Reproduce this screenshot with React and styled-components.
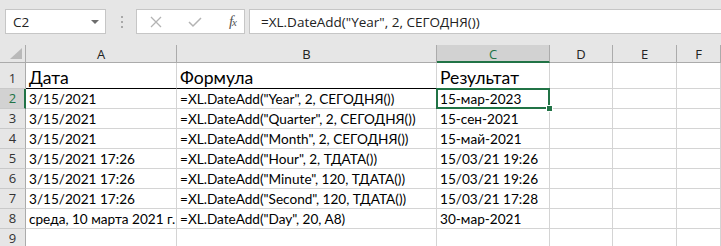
import React from 'react';
import styled, {createGlobalStyle, css} from 'styled-components';

const GREEN = '#217346';
const HEAD_BG = '#e6e6e6';
const HEAD_SEL = '#d2d2d2';
const GRID = '#d4d4d4';
const HEAD_LINE = '#ababab';

const GlobalStyle = createGlobalStyle`
    html, body {
        margin: 0;
        padding: 0;
        background: ${HEAD_BG};
        overflow: hidden;
    }
`;

const Window = styled.div`
    width: 721px;
    height: 246px;
    background: ${HEAD_BG};
    overflow: hidden;
`;

const FormulaBar = styled.div`
    display: flex;
    align-items: center;
    height: 45px;
    box-sizing: border-box;
    padding: 9px 0 11px 5px;
`;

const NameBox = styled.div`
    box-sizing: border-box;
    width: 101px;
    height: 25px;
    background: #fff;
    border: 1px solid #c6c6c6;
    display: flex;
    align-items: center;
    justify-content: space-between;
    padding: 0 6px 0 7px;
    font-family: "Open Sans", "Liberation Sans", sans-serif;
    font-size: 13.5px;
    color: #222;
`;

const DropArrow = styled.span`
    width: 0;
    height: 0;
    border-left: 4px solid transparent;
    border-right: 4px solid transparent;
    border-top: 4px solid #6d6d6d;
    margin-top: 1px;
`;

const Grip = styled.div`
    display: flex;
    flex-direction: column;
    gap: 3px;
    margin: 0 13px 0 15px;
    span {
        width: 2px;
        height: 2px;
        background: #a8a8a8;
    }
`;

const FxButtons = styled.div`
    box-sizing: border-box;
    width: 109px;
    height: 25px;
    background: #fff;
    border: 1px solid #c6c6c6;
    display: flex;
    align-items: center;
    justify-content: space-between;
    padding: 0 8px 0 13px;
`;

const Fx = styled.span`
    font-family: "Liberation Serif", serif;
    font-style: italic;
    font-size: 15px;
    color: #555;
    letter-spacing: -1px;
    small {
        font-size: 11px;
    }
`;

const FormulaInput = styled.div`
    flex: 1;
    box-sizing: border-box;
    height: 25px;
    margin-left: 4px;
    background: #fff;
    border: 1px solid #c6c6c6;
    border-right: none;
    display: flex;
    align-items: center;
    padding-left: 11px;
    font-family: "Open Sans", "Liberation Sans", sans-serif;
    font-size: 13.5px;
    color: #222;
    white-space: nowrap;
`;

const Sheet = styled.div`
    display: grid;
    grid-template-columns: 26px 151px 260px 113px 63px 64px 1fr;
    grid-template-rows: 18px 26px repeat(8, 20px);
    background: #fff;
`;

const Corner = styled.div`
    background: ${HEAD_BG};
    border-right: 1px solid ${HEAD_LINE};
    border-bottom: 1px solid ${HEAD_LINE};
    display: flex;
    align-items: flex-end;
    justify-content: flex-end;
    padding: 0 3px 3px 0;
`;

const ColHead = styled.div`
    box-sizing: border-box;
    background: ${HEAD_BG};
    border-right: 1px solid ${HEAD_LINE};
    border-bottom: 1px solid ${HEAD_LINE};
    display: flex;
    align-items: center;
    justify-content: center;
    font-family: "Open Sans", "Liberation Sans", sans-serif;
    font-size: 13px;
    color: #222;
    ${p => p.$selected && css`
        background: ${HEAD_SEL};
        border-bottom: 2px solid ${GREEN};
        color: ${GREEN};
        padding-top: 1px;
    `}
`;

const RowHead = styled.div`
    box-sizing: border-box;
    background: ${HEAD_BG};
    border-right: 1px solid ${HEAD_LINE};
    border-bottom: 1px solid #c9c9c9;
    display: flex;
    align-items: flex-end;
    justify-content: center;
    padding-bottom: 1px;
    font-family: "Open Sans", "Liberation Sans", sans-serif;
    font-size: 13px;
    color: #333;
    ${p => p.$selected && css`
        background: ${HEAD_SEL};
        border-right: 2px solid ${GREEN};
        color: ${GREEN};
        padding-left: 1px;
    `}
`;

const Cell = styled.div`
    position: relative;
    box-sizing: border-box;
    border-right: 1px solid ${GRID};
    border-bottom: 1px solid ${GRID};
    display: flex;
    align-items: flex-end;
    padding: 0 0 1px 3px;
    font-family: "Lato", "Liberation Sans", sans-serif;
    font-size: 13.6px;
    color: #000;
    white-space: nowrap;
    ${p => p.$title && css`
        font-size: 17.6px;
        padding-bottom: 0;
        border-bottom: 1px solid #000;
    `}
    ${p => p.$active && css`
        &::after {
            content: '';
            position: absolute;
            left: -1px;
            top: -1px;
            right: -1px;
            bottom: -1px;
            border: 2px solid ${GREEN};
        }
        &::before {
            content: '';
            position: absolute;
            right: -4px;
            bottom: -4px;
            width: 5px;
            height: 5px;
            background: ${GREEN};
            border: 1px solid #fff;
            z-index: 1;
        }
    `}
`;

const columns = ['A', 'B', 'C', 'D', 'E', 'F'];

const titles = ['Дата', 'Формула', 'Результат'];

const rows = [
    ['3/15/2021', '=XL.DateAdd("Year", 2, СЕГОДНЯ())', '15-мар-2023'],
    ['3/15/2021', '=XL.DateAdd("Quarter", 2, СЕГОДНЯ())', '15-сен-2021'],
    ['3/15/2021', '=XL.DateAdd("Month", 2, СЕГОДНЯ())', '15-май-2021'],
    ['3/15/2021 17:26', '=XL.DateAdd("Hour", 2, ТДАТА())', '15/03/21 19:26'],
    ['3/15/2021 17:26', '=XL.DateAdd("Minute", 120, ТДАТА())', '15/03/21 19:26'],
    ['3/15/2021 17:26', '=XL.DateAdd("Second", 120, ТДАТА())', '15/03/21 17:28'],
    ['среда, 10 марта 2021 г.', '=XL.DateAdd("Day", 20, A8)', '30-мар-2021'],
    ['', '', ''],
];

const CancelIcon = () => (
    <svg width="12" height="12" viewBox="0 0 12 12">
        <path d="M1 1 L11 11 M11 1 L1 11" stroke="#b3b3b3" strokeWidth="1.3" fill="none"/>
    </svg>
);

const CheckIcon = () => (
    <svg width="14" height="12" viewBox="0 0 14 12">
        <path d="M1 6 L5 10 L13 2" stroke="#b3b3b3" strokeWidth="1.5" fill="none"/>
    </svg>
);

const CornerTriangle = () => (
    <svg width="12" height="11" viewBox="0 0 12 11">
        <polygon points="12,0 12,11 0,11" fill="#b9b9b9"/>
    </svg>
);

const App = () => {
    return (
        <Window>
            <GlobalStyle/>
            <FormulaBar>
                <NameBox>
                    C2
                    <DropArrow/>
                </NameBox>
                <Grip><span/><span/><span/></Grip>
                <FxButtons>
                    <CancelIcon/>
                    <CheckIcon/>
                    <Fx>f<small>x</small></Fx>
                </FxButtons>
                <FormulaInput>=XL.DateAdd("Year", 2, СЕГОДНЯ())</FormulaInput>
            </FormulaBar>
            <Sheet>
                <Corner><CornerTriangle/></Corner>
                {columns.map(col => (
                    <ColHead key={col} $selected={col === 'C'}>{col}</ColHead>
                ))}

                <RowHead>1</RowHead>
                {titles.map(t => <Cell key={t} $title>{t}</Cell>)}
                <Cell/><Cell/><Cell/>

                {rows.map((row, i) => (
                    <React.Fragment key={i}>
                        <RowHead $selected={i === 0}>{i + 2}</RowHead>
                        {row.map((value, j) => (
                            <Cell key={j} $active={i === 0 && j === 2}>{value}</Cell>
                        ))}
                        <Cell/><Cell/><Cell/>
                    </React.Fragment>
                ))}
            </Sheet>
        </Window>
    );
};

export default App;
